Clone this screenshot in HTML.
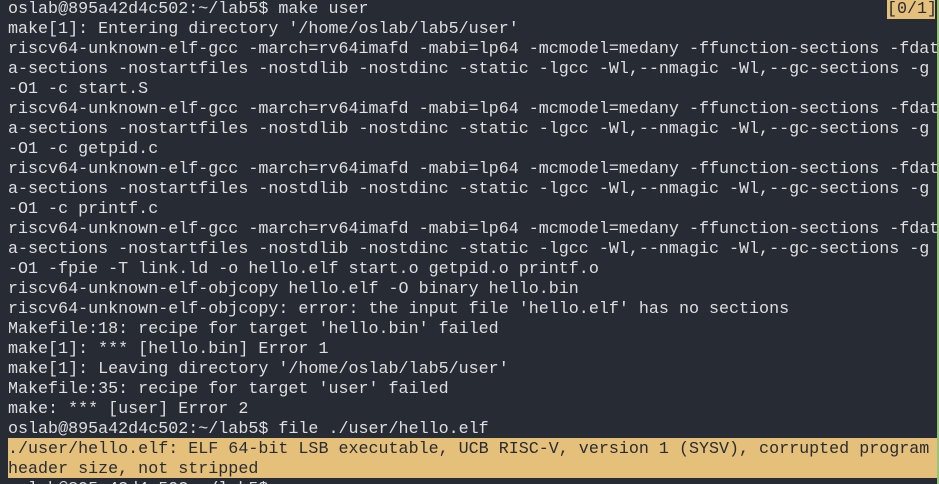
<!DOCTYPE html>
<html><head><meta charset="utf-8"><style>
html,body{margin:0;padding:0;width:939px;height:484px;overflow:hidden;background:#272b33;position:relative;}
.t{position:absolute;left:8px;top:0px;font-family:"Liberation Mono","DejaVu Sans Mono",monospace;font-size:16.7px;line-height:20px;color:#dcdfe4;white-space:pre;}
.hl{position:absolute;left:8px;top:438px;width:929px;height:40px;background:#e5c07b;}
.hl2{color:#282c34;}
.tag{position:absolute;left:887px;top:0;width:48px;height:19px;background:#e5c07b;color:#282c34;font-family:"Liberation Mono",monospace;font-size:16.7px;line-height:19px;text-align:center;}
.bar{position:absolute;left:937px;top:0;width:2px;height:484px;background:#98c379;}
</style></head><body>
<div class="hl"></div>
<div class="t">oslab@895a42d4c502:~/lab5$ make user
make[1]: Entering directory '/home/oslab/lab5/user'
riscv64-unknown-elf-gcc -march=rv64imafd -mabi=lp64 -mcmodel=medany -ffunction-sections -fdat
a-sections -nostartfiles -nostdlib -nostdinc -static -lgcc -Wl,--nmagic -Wl,--gc-sections -g
-O1 -c start.S
riscv64-unknown-elf-gcc -march=rv64imafd -mabi=lp64 -mcmodel=medany -ffunction-sections -fdat
a-sections -nostartfiles -nostdlib -nostdinc -static -lgcc -Wl,--nmagic -Wl,--gc-sections -g
-O1 -c getpid.c
riscv64-unknown-elf-gcc -march=rv64imafd -mabi=lp64 -mcmodel=medany -ffunction-sections -fdat
a-sections -nostartfiles -nostdlib -nostdinc -static -lgcc -Wl,--nmagic -Wl,--gc-sections -g
-O1 -c printf.c
riscv64-unknown-elf-gcc -march=rv64imafd -mabi=lp64 -mcmodel=medany -ffunction-sections -fdat
a-sections -nostartfiles -nostdlib -nostdinc -static -lgcc -Wl,--nmagic -Wl,--gc-sections -g
-O1 -fpie -T link.ld -o hello.elf start.o getpid.o printf.o
riscv64-unknown-elf-objcopy hello.elf -O binary hello.bin
riscv64-unknown-elf-objcopy: error: the input file 'hello.elf' has no sections
Makefile:18: recipe for target 'hello.bin' failed
make[1]: *** [hello.bin] Error 1
make[1]: Leaving directory '/home/oslab/lab5/user'
Makefile:35: recipe for target 'user' failed
make: *** [user] Error 2
oslab@895a42d4c502:~/lab5$ file ./user/hello.elf
<span class="hl2">./user/hello.elf: ELF 64-bit LSB executable, UCB RISC-V, version 1 (SYSV), corrupted program
header size, not stripped</span>
oslab@895a42d4c502:~/lab5$ </div>
<div class="tag">[0/1]</div>
<div class="bar"></div>
</body></html>
